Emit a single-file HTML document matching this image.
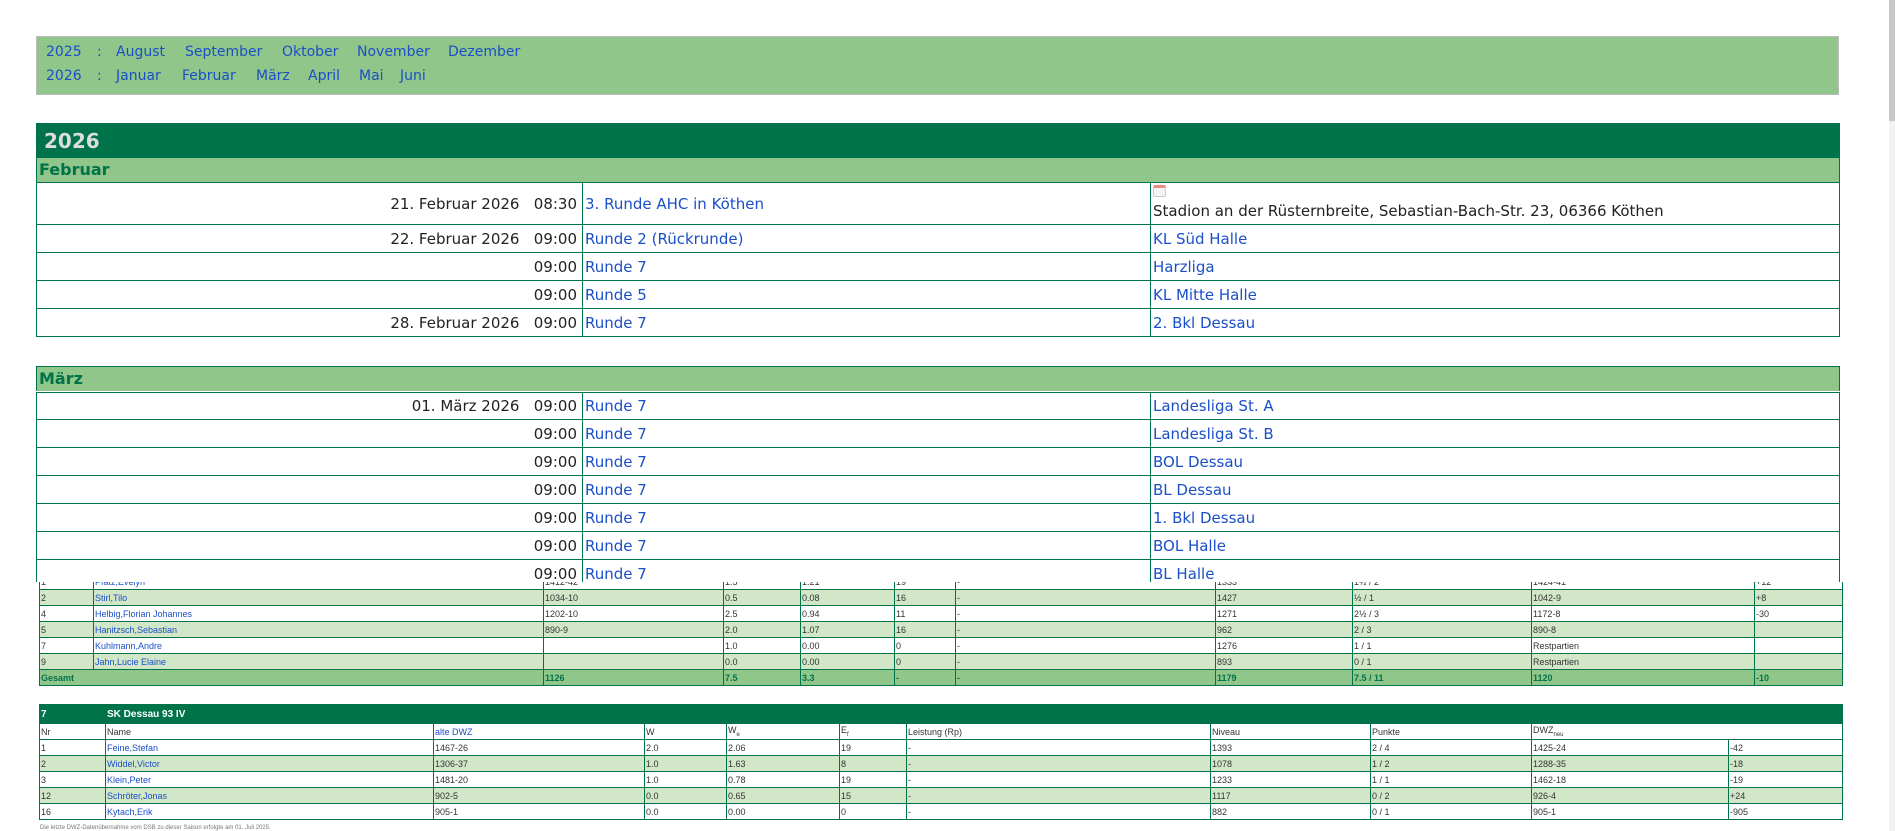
<!DOCTYPE html>
<html><head><meta charset="utf-8">
<style>
*{margin:0;padding:0;box-sizing:border-box}
body{width:1895px;height:831px;overflow:hidden;background:#fff;position:relative;font-family:"DejaVu Sans",Verdana,sans-serif;}
a{color:#1a4fc8;text-decoration:none}
.nav{position:absolute;left:36px;top:36px;width:1803px;height:59px;background:#90c68a;border:1px solid #bcbcbc;font-size:14px;color:#1a4fc8}
.nav span{position:absolute}
.ov{position:absolute;left:0;top:0;width:1888px;height:582px;background:#fff;z-index:5;overflow:hidden}
.yr{position:absolute;left:36px;top:123px;width:1804px;height:35px;background:#00734a;color:#ddd;font-weight:bold;font-size:20px;padding:6px 0 0 8px}
.mh{position:absolute;left:36px;width:1804px;height:25px;background:#90c68a;color:#00734a;font-weight:bold;font-size:16px;padding:2px 0 0 2px;border:1px solid #00734a;border-bottom:none}
.r{position:absolute;left:36px;width:1804px;border:1px solid #00734a;border-top:none;font-size:15px;color:#222}
.r div{position:absolute;top:0;bottom:0;display:flex;align-items:center}
.c1{left:0;width:545px;justify-content:flex-end;padding-right:5px;white-space:pre}
.c2{left:545px;width:568px;border-left:1px solid #00734a;padding-left:2px}
.c3{left:1113px;border-left:1px solid #00734a;padding-left:2px;right:0}
.top{border-top:1px solid #00734a}
table{position:absolute;left:39px;width:1803px;border-collapse:collapse;table-layout:fixed;font-family:"Liberation Sans",Arial,sans-serif;font-size:9px;color:#333}
td{height:16px;border:1px solid #00734a;padding:0 1px;white-space:nowrap;overflow:hidden;vertical-align:middle}
td.n{color:#1a4fc8}
tr.g td{background:#d2e6c8}
tr.t td{background:#90c68a;color:#00734a;font-weight:bold}
tr.h td{background:#00734a;color:#fff;font-weight:bold;font-size:10px;height:19px;border-color:#00734a}
</style></head><body>
<div style="position:absolute;left:713px;top:0;width:450px;height:1px;background:#ccc"></div>
<div style="position:absolute;left:1889px;top:0;width:6px;height:831px;background:#f2f2f2;z-index:9"></div>
<div style="position:absolute;left:1889px;top:0;width:6px;height:121px;background:#c8c8c8;z-index:9"></div>

<div class="ov">
<div class="nav">
<span style="left:9px;top:7px">2025</span><span style="left:60px;top:7px">:</span>
<span style="left:79px;top:7px">August</span><span style="left:148px;top:7px">September</span><span style="left:245px;top:7px">Oktober</span><span style="left:320px;top:7px">November</span><span style="left:411px;top:7px">Dezember</span>
<span style="left:9px;top:31px">2026</span><span style="left:60px;top:31px">:</span>
<span style="left:79px;top:31px">Januar</span><span style="left:145px;top:31px">Februar</span><span style="left:219px;top:31px">März</span><span style="left:271px;top:31px">April</span><span style="left:322px;top:31px">Mai</span><span style="left:363px;top:31px">Juni</span>
</div>
<div class="yr">2026</div>
<div class="mh" style="top:157px">Februar</div>
<div class="r top" style="top:182px;height:43px"><div class="c1">21. Februar 2026   08:30</div><div class="c2"><a>3. Runde AHC in Köthen</a></div><div class="c3" style="display:block;padding-top:2px"><div style="position:relative;width:13px;height:12px;border:1px solid #ccc;border-top:3px solid #e88;border-radius:2px;background:#f4f4f4"></div><div style="position:relative;margin-top:5px">Stadion an der Rüsternbreite, Sebastian-Bach-Str. 23, 06366 Köthen</div></div></div>
<div class="r" style="top:225px;height:28px"><div class="c1">22. Februar 2026   09:00</div><div class="c2"><a>Runde 2 (Rückrunde)</a></div><div class="c3"><a>KL Süd Halle</a></div></div>
<div class="r" style="top:253px;height:28px"><div class="c1">09:00</div><div class="c2"><a>Runde 7</a></div><div class="c3"><a>Harzliga</a></div></div>
<div class="r" style="top:281px;height:28px"><div class="c1">09:00</div><div class="c2"><a>Runde 5</a></div><div class="c3"><a>KL Mitte Halle</a></div></div>
<div class="r" style="top:309px;height:28px"><div class="c1">28. Februar 2026   09:00</div><div class="c2"><a>Runde 7</a></div><div class="c3"><a>2. Bkl Dessau</a></div></div>

<div class="mh" style="top:366px">März</div>
<div class="r top" style="top:392px;height:28px"><div class="c1">01. März 2026   09:00</div><div class="c2"><a>Runde 7</a></div><div class="c3"><a>Landesliga St. A</a></div></div>
<div class="r" style="top:420px;height:28px"><div class="c1">09:00</div><div class="c2"><a>Runde 7</a></div><div class="c3"><a>Landesliga St. B</a></div></div>
<div class="r" style="top:448px;height:28px"><div class="c1">09:00</div><div class="c2"><a>Runde 7</a></div><div class="c3"><a>BOL Dessau</a></div></div>
<div class="r" style="top:476px;height:28px"><div class="c1">09:00</div><div class="c2"><a>Runde 7</a></div><div class="c3"><a>BL Dessau</a></div></div>
<div class="r" style="top:504px;height:28px"><div class="c1">09:00</div><div class="c2"><a>Runde 7</a></div><div class="c3"><a>1. Bkl Dessau</a></div></div>
<div class="r" style="top:532px;height:28px"><div class="c1">09:00</div><div class="c2"><a>Runde 7</a></div><div class="c3"><a>BOL Halle</a></div></div>
<div class="r" style="top:560px;height:40px;border-bottom:none"><div class="c1" style="align-items:flex-start;padding-top:5px">09:00</div><div class="c2" style="align-items:flex-start;padding-top:5px"><a>Runde 7</a></div><div class="c3" style="align-items:flex-start;padding-top:5px"><a>BL Halle</a></div></div>
</div>

<table style="top:573px">
<colgroup><col style="width:54px"><col style="width:450px"><col style="width:180px"><col style="width:77px"><col style="width:94px"><col style="width:61px"><col style="width:260px"><col style="width:137px"><col style="width:179px"><col style="width:223px"><col style="width:88px"></colgroup>
<tr><td>1</td><td class="n">Pfatz,Evelyn</td><td>1412-42</td><td>1.5</td><td>1.21</td><td>19</td><td>-</td><td>1333</td><td>1½ / 2</td><td>1424-41</td><td>+12</td></tr>
<tr class="g"><td>2</td><td class="n">Stirl,Tilo</td><td>1034-10</td><td>0.5</td><td>0.08</td><td>16</td><td>-</td><td>1427</td><td>½ / 1</td><td>1042-9</td><td>+8</td></tr>
<tr><td>4</td><td class="n">Helbig,Florian Johannes</td><td>1202-10</td><td>2.5</td><td>0.94</td><td>11</td><td>-</td><td>1271</td><td>2½ / 3</td><td>1172-8</td><td>-30</td></tr>
<tr class="g"><td>5</td><td class="n">Hanitzsch,Sebastian</td><td>890-9</td><td>2.0</td><td>1.07</td><td>16</td><td>-</td><td>962</td><td>2 / 3</td><td>890-8</td><td></td></tr>
<tr><td>7</td><td class="n">Kuhlmann,Andre</td><td></td><td>1.0</td><td>0.00</td><td>0</td><td>-</td><td>1276</td><td>1 / 1</td><td>Restpartien</td><td></td></tr>
<tr class="g"><td>9</td><td class="n">Jahn,Lucie Elaine</td><td></td><td>0.0</td><td>0.00</td><td>0</td><td>-</td><td>893</td><td>0 / 1</td><td>Restpartien</td><td></td></tr>
<tr class="t"><td colspan="2">Gesamt</td><td>1126</td><td>7.5</td><td>3.3</td><td>-</td><td>-</td><td>1179</td><td>7.5 / 11</td><td>1120</td><td>-10</td></tr>
</table>

<table style="top:704px">
<colgroup><col style="width:66px"><col style="width:328px"><col style="width:211px"><col style="width:82px"><col style="width:113px"><col style="width:67px"><col style="width:304px"><col style="width:160px"><col style="width:161px"><col style="width:197px"><col style="width:114px"></colgroup>
<tr class="h"><td>7</td><td colspan="10">SK Dessau 93 IV</td></tr>
<tr><td>Nr</td><td>Name</td><td class="n">alte DWZ</td><td>W</td><td>W<sub style="font-size:6px">e</sub></td><td>E<sub style="font-size:6px">f</sub></td><td>Leistung (Rp)</td><td>Niveau</td><td>Punkte</td><td colspan="2">DWZ<sub style="font-size:6px">neu</sub></td></tr>
<tr><td>1</td><td class="n">Feine,Stefan</td><td>1467-26</td><td>2.0</td><td>2.06</td><td>19</td><td>-</td><td>1393</td><td>2 / 4</td><td>1425-24</td><td>-42</td></tr>
<tr class="g"><td>2</td><td class="n">Widdel,Victor</td><td>1306-37</td><td>1.0</td><td>1.63</td><td>8</td><td>-</td><td>1078</td><td>1 / 2</td><td>1288-35</td><td>-18</td></tr>
<tr><td>3</td><td class="n">Klein,Peter</td><td>1481-20</td><td>1.0</td><td>0.78</td><td>19</td><td>-</td><td>1233</td><td>1 / 1</td><td>1462-18</td><td>-19</td></tr>
<tr class="g"><td>12</td><td class="n">Schröter,Jonas</td><td>902-5</td><td>0.0</td><td>0.65</td><td>15</td><td>-</td><td>1117</td><td>0 / 2</td><td>926-4</td><td>+24</td></tr>
<tr><td>16</td><td class="n">Kytach,Erik</td><td>905-1</td><td>0.0</td><td>0.00</td><td>0</td><td>-</td><td>882</td><td>0 / 1</td><td>905-1</td><td>-905</td></tr>
</table>
<div style="position:absolute;left:40px;top:825px;font-family:'Liberation Sans',sans-serif;font-size:6px;color:#777">Die letzte DWZ-Datenübernahme vom DSB zu dieser Saison erfolgte am 01. Juli 2025.</div>
</body></html>
